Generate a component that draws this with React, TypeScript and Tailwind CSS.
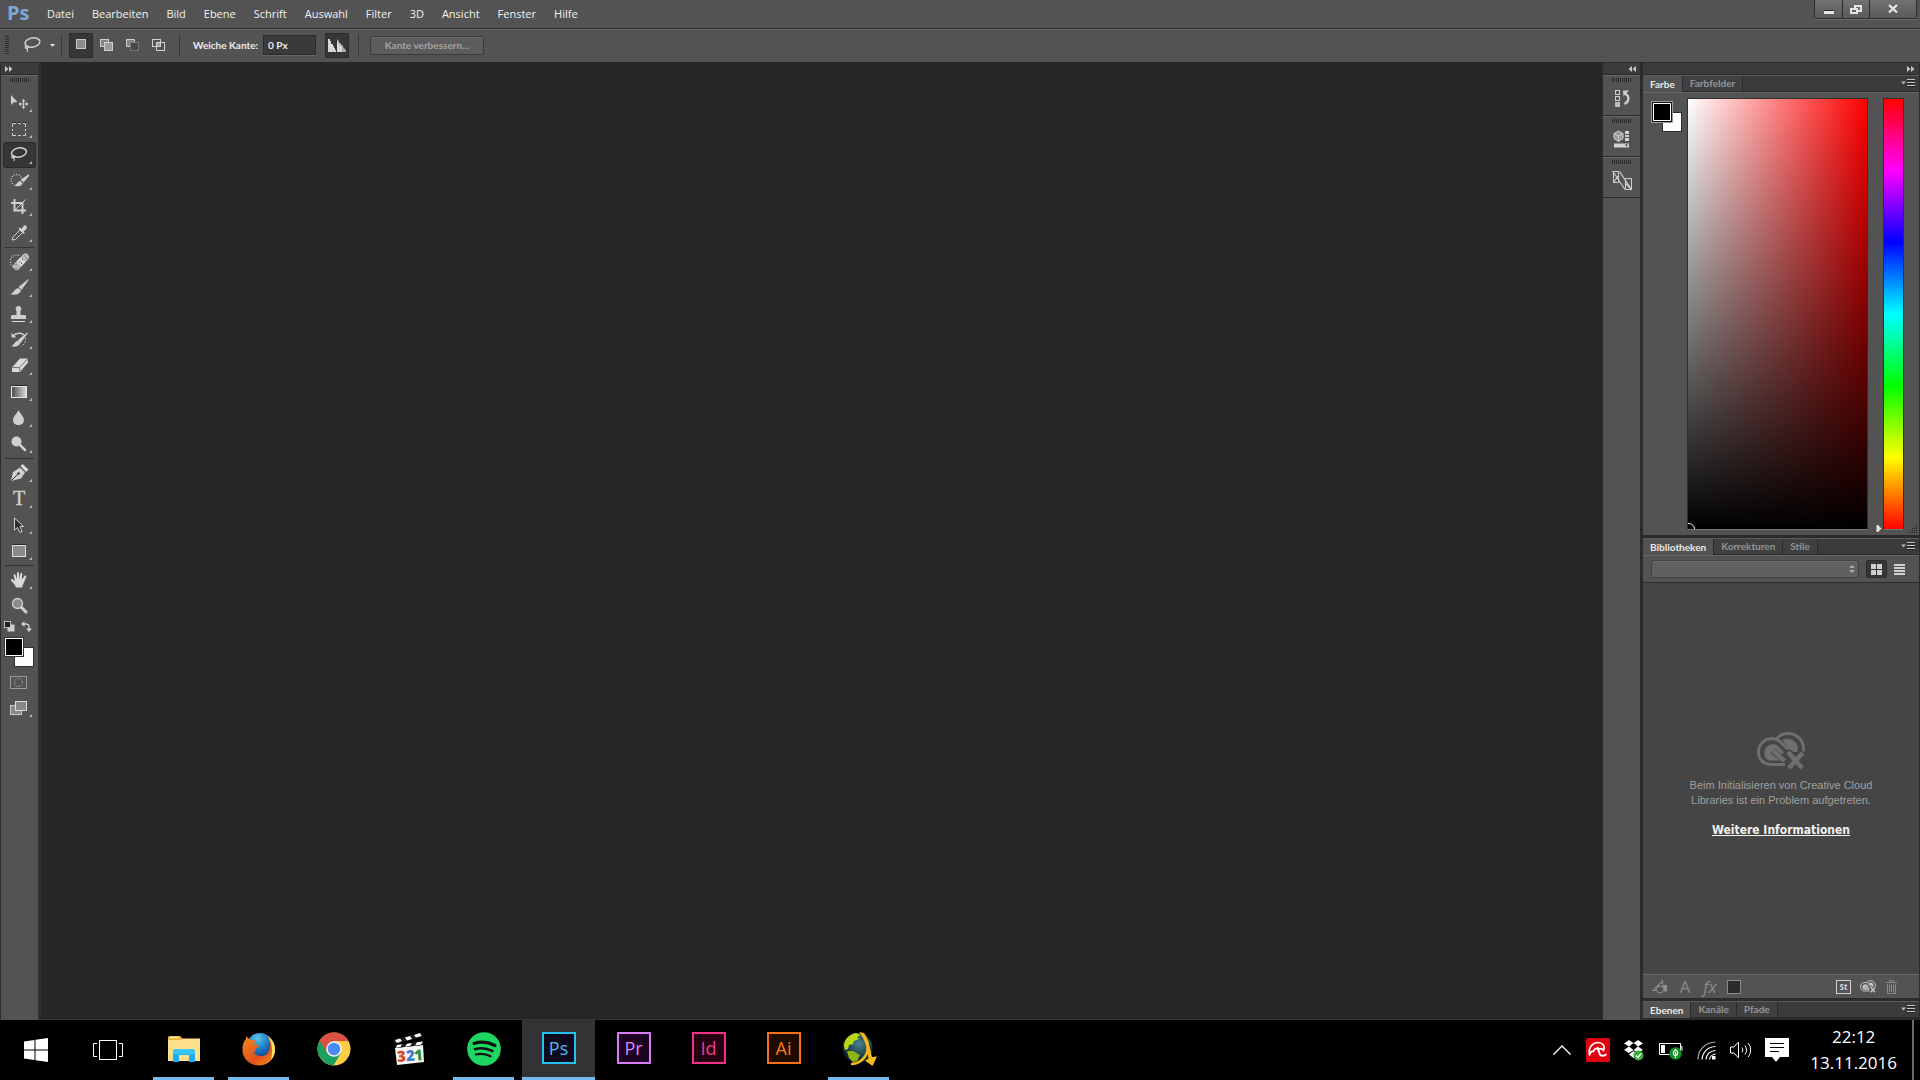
import type { ReactNode } from 'react'

const MENU = ['Datei', 'Bearbeiten', 'Bild', 'Ebene', 'Schrift', 'Auswahl', 'Filter', '3D', 'Ansicht', 'Fenster', 'Hilfe']

/* ---------- small shared pieces ---------- */

function Grip() {
  return (
    <svg width="20" height="4" viewBox="0 0 20 4" className="block" aria-hidden="true">
      {[0, 2, 4, 6, 8, 10, 12, 14, 16, 18].map((x) => (
        <rect key={x} x={x} width="1" height="4" fill="#2a2a2a" />
      ))}
    </svg>
  )
}

function DoubleChevron({ left = false }: { left?: boolean }) {
  return (
    <svg width="8" height="6" viewBox="0 0 8 6" className={left ? 'block rotate-180' : 'block'} aria-hidden="true">
      <path d="M0 0L3.500 3L0 6ZM4 0L7.500 3L4 6Z" fill="#c6c6c6" />
    </svg>
  )
}

function PanelMenuButton() {
  return (
    <button aria-label="Bedienfeldmenü" className="mr-1 ml-auto flex items-center">
      <svg width="14" height="9" viewBox="0 0 14 9" aria-hidden="true">
        <path d="M0 2.500H5L2.500 5.500Z" fill="#b5b5b5" />
        <path d="M6 .5H14M6 3.500H14M6 6.500H14" stroke="#c4c4c4" />
        <path d="M6 1.500H14M6 4.500H14M6 7.500H14" stroke="#222" />
      </svg>
    </button>
  )
}

function Tabs({ items }: { items: string[] }) {
  return (
    <div className="flex h-[17px] shrink-0 border-t border-[#5c5c5c] bg-[#3b3b3b]">
      {items.map((item, i) => (
        <button
          key={item}
          className={`border-r border-[#2b2b2b] px-[7px] font-['Lato',sans-serif] text-[10px] leading-[15px] font-bold ${
            i === 0 ? 'bg-[#535353] text-[#e8e8e8]' : 'border-b bg-[#404040] text-[#959595]'
          }`}
        >
          {item}
        </button>
      ))}
      <div className="flex flex-1 border-b border-[#2b2b2b]">
        <PanelMenuButton />
      </div>
    </div>
  )
}

/* ---------- tool box ---------- */

function Tool({ label, active, flyout = true, children }: { label: string; active?: boolean; flyout?: boolean; children: ReactNode }) {
  return (
    <button
      aria-label={label}
      className={`my-px flex h-6 w-[31px] items-center justify-center rounded-[2px] ${
        active ? 'bg-[#363636] shadow-[0_0_0_1px_#2a2a2a]' : ''
      }`}
    >
      <svg width="24" height="24" viewBox="0 0 24 24" fill="none" stroke="#d0d0d0" aria-hidden="true">
        {children}
        {flyout && <path d="M24 18V21H21Z" fill="#b8b8b8" stroke="none" />}
      </svg>
    </button>
  )
}

function ToolRule() {
  return <div className="my-px h-px w-[29px] bg-[#343434]" />
}

function Toolbox() {
  return (
    <aside className="flex w-[40px] shrink-0 flex-col border-r-3 border-[#303030] bg-[#535353]">
      <div className="flex h-[13px] shrink-0 items-center border-y border-[#2b2b2b] bg-[#3b3b3b] pl-1">
        <DoubleChevron />
      </div>
      <div className="flex flex-col items-center border-t border-[#666]">
        <div className="mt-[2px] mb-[8px]">
          <Grip />
        </div>
        <Tool label="Verschieben">
          <path d="M3 4V14L5.500 11.500L9.500 11Z" fill="#d0d0d0" stroke="none" />
          <path d="M15.500 9V17M11.500 13H19.500" strokeWidth="1" />
          <path d="M15.500 8L17.500 10.500H13.500ZM15.500 18L17.500 15.500H13.500ZM10.500 13L13 11V15ZM20.500 13L18 11V15Z" fill="#d0d0d0" stroke="none" />
        </Tool>
        <Tool label="Auswahlrechteck">
          <path d="M4.500 10V6.500H8M10 6.500H13M15 6.500H17.500V10M17.500 12V14M17.500 16V18.500H15M13 18.500H10M8 18.500H4.500V16M4.500 14V12" />
          <path d="M4 5.500H8M10 5.500H13M15 5.500H18" stroke="#2a2a2a" />
        </Tool>
        <Tool label="Lasso" active>
          <ellipse cx="11" cy="9.500" rx="7.500" ry="4.500" strokeWidth="1.500" transform="rotate(-10 11 9.500)" />
          <path d="M5 12C2.500 14 4 15.500 6 14.500C8 13.500 5.500 12 5.500 13.500C5.500 15 7 16 6 18" strokeWidth="1.200" />
        </Tool>
        <Tool label="Schnellauswahl">
          <circle cx="8.500" cy="11" r="5.500" strokeDasharray="1 1.500" strokeWidth="1.300" />
          <path d="M21 5L13 10.500L15.500 13.500L21 7Z" fill="#d0d0d0" stroke="none" />
          <path d="M12.500 11.500L15 14.500C13.500 18 9 18 6 17C8 16.500 8.500 12.500 12.500 11.500Z" fill="#d0d0d0" stroke="#3a3a3a" strokeWidth=".5" />
        </Tool>
        <Tool label="Freistellen">
          <path d="M3 8H14.500V19M6.500 4V15.500H18" strokeWidth="2" />
          <path d="M6.500 15.500L17.500 4.500" />
        </Tool>
        <Tool label="Pipette">
          <path d="M4 19L5 16L12 9L14.500 11.500L7.500 18.500Z" stroke="#d0d0d0" />
          <path d="M10.500 7.500L12 6.500L13.500 8L16 4.500C17.500 3.500 20 6 18.500 8L15.500 10.500L17 12L15.500 13Z" fill="#d0d0d0" stroke="none" />
        </Tool>
        <ToolRule />
        <Tool label="Bereichsreparatur">
          <path d="M11 5.500C6 3.500 2 8 2.500 11C2.500 15 4 17 6 17" strokeDasharray="1 1.500" strokeWidth="1.300" />
          <path d="M8.500 16.500L17.500 7" strokeWidth="7" strokeLinecap="round" stroke="#b9b9b9" />
          <path d="M11 14L15 9.800" strokeWidth="6.500" stroke="#dedede" />
          <path d="M11.500 11.500V12.500M13.500 13V14M14.500 9V10M8 14V15M8 18V19M17 5.500V6.500M18.500 8V9M13 11.500V12.500" stroke="#555" />
        </Tool>
        <Tool label="Pinsel">
          <path d="M20.500 3.500L11 11L13.500 13.500Z" fill="#d0d0d0" stroke="#d0d0d0" strokeWidth=".8" />
          <path d="M10.500 12L13 14.500C12 18.500 6.500 19.500 2 18C5.500 17.500 6 13 10.500 12Z" fill="#d0d0d0" stroke="none" />
        </Tool>
        <Tool label="Kopierstempel">
          <path d="M10.500 4C13.500 4 14 7 12.500 9V13H17L18 14V17H3V14L4 13H8.500V9C7 7 7.500 4 10.500 4Z" fill="#cfcfcf" stroke="none" />
          <path d="M4 19.500H17" stroke="#e0e0e0" />
        </Tool>
        <Tool label="Protokollpinsel">
          <path d="M5 8C8 4.500 14 4.500 16 7" strokeWidth="1.500" />
          <path d="M3.500 5V9.500H8.500Z" fill="#d0d0d0" stroke="none" />
          <path d="M19.500 5L10.500 12L12.500 14.500Z" fill="#d0d0d0" />
          <path d="M10 12.500L12.500 15C11 18.500 6.500 19.500 3 18C6 17.500 6.500 13.500 10 12.500Z" fill="#d0d0d0" stroke="none" />
          <path d="M17.500 10C18 14 16 17 13.500 18" strokeDasharray="1.500 1.500" />
        </Tool>
        <Tool label="Radiergummi">
          <path d="M4 13.500L12 4.500H19.500L20 8.500L12 18H4Z" fill="#d9d9d9" stroke="none" />
          <path d="M4.500 13.500H11.500L19.500 5M11.500 13.500L12 18" stroke="#777" />
        </Tool>
        <Tool label="Verlauf">
          <defs>
            <linearGradient id="toolGradient">
              <stop stopColor="#4b4b4b" />
              <stop offset="1" stopColor="#ddd" />
            </linearGradient>
          </defs>
          <rect x="3.500" y="6.500" width="15" height="11" fill="url(#toolGradient)" stroke="#e6e6e6" />
          <path d="M3 5.500H19" stroke="#2a2a2a" />
        </Tool>
        <Tool label="Weichzeichner">
          <path d="M10.500 4C11.500 7 16 10.500 16 14C16 17 13.500 19 10.500 19C7.500 19 5 17 5 14C5 10.500 9.500 7 10.500 4Z" fill="#cfcfcf" stroke="none" />
        </Tool>
        <Tool label="Abwedler">
          <path d="M12 13L17 18" strokeWidth="2.500" strokeLinecap="round" />
          <circle cx="8.500" cy="9.500" r="5" fill="#d0d0d0" stroke="none" />
        </Tool>
        <ToolRule />
        <Tool label="Zeichenstift">
          <path d="M3 20L5 11L12 6.500L17 11.500L13 17.500Z" fill="#d0d0d0" stroke="none" />
          <path d="M12.500 5L14.500 3L20.500 8.500L18 11Z" fill="#dcdcdc" stroke="none" />
          <path d="M3.500 19.500L10 13" stroke="#3b3b3b" />
          <circle cx="10.500" cy="12.500" r="1.300" fill="#3b3b3b" stroke="none" />
        </Tool>
        <Tool label="Text">
          <text x="11" y="18" textAnchor="middle" fontSize="20" fontFamily="Liberation Serif, serif" fill="#d0d0d0" stroke="#d0d0d0" strokeWidth=".4">T</text>
        </Tool>
        <Tool label="Pfadauswahl">
          <path d="M6.500 5V17L9.500 14.500L11.500 19H14L12 13.500H15.500Z" fill="#2d2d2d" stroke="#d0d0d0" />
        </Tool>
        <Tool label="Rechteck">
          <rect x="4.500" y="6.500" width="13" height="11" fill="#8a8a8a" stroke="#dedede" />
          <path d="M4 5.500H18" stroke="#2a2a2a" />
        </Tool>
        <ToolRule />
        <Tool label="Hand">
          <path d="M8 19.500L6.500 16.500L3 12.500C2.500 11 4 10.500 5 11.500L7 13L5.500 7C5.500 5.500 7 5.500 7.500 7L8.800 11L9 5C9.200 3.500 10.800 3.500 11 5L11.200 11L12.500 5.500C13 4.200 14.500 4.500 14.300 6L13.800 11.500L16.500 8C17.500 7 18.800 7.800 18.200 9L15.500 15.500L14 19.500Z" fill="#d8d8d8" stroke="none" />
        </Tool>
        <Tool label="Zoom" flyout={false}>
          <path d="M13 13L18 18" strokeWidth="3" strokeLinecap="round" />
          <circle cx="9.500" cy="9.500" r="5" fill="#8b8b8b" strokeWidth="1.300" />
        </Tool>
        <div className="mt-[2px] flex h-[16px] w-[31px] items-start justify-between pr-[3px]">
          <button aria-label="Standardfarben">
            <svg width="11" height="11" viewBox="0 0 11 11" className="block" aria-hidden="true">
              <rect x="3.500" y="3.500" width="7" height="7" fill="#d0d0d0" />
              <rect x=".5" y=".5" width="6" height="6" fill="#222" stroke="#bbb" />
            </svg>
          </button>
          <button aria-label="Farben tauschen">
            <svg width="11" height="11" viewBox="0 0 11 11" className="block" aria-hidden="true">
              <path d="M2 3H5Q8 3 8 6V9" fill="none" stroke="#d0d0d0" strokeWidth="1.300" />
              <path d="M0 3L3.500 0V6ZM8 11L5 7.500H11Z" fill="#d0d0d0" />
            </svg>
          </button>
        </div>
        <div className="relative mb-[2px] h-[30px] w-[29px]">
          <button aria-label="Hintergrundfarbe" className="absolute right-0 bottom-0 size-5 border border-[#333] bg-white" />
          <button aria-label="Vordergrundfarbe" className="absolute top-px left-0 size-[18px] border border-white bg-black shadow-[0_0_0_1px_#333]" />
        </div>
        <Tool label="Maskierungsmodus" flyout={false}>
          <rect x="2.500" y="6.500" width="16" height="12" stroke="#9b9b9b" />
          <circle cx="10.500" cy="12.500" r="4" strokeDasharray="1 1.100" stroke="#bbb" />
        </Tool>
        <Tool label="Bildschirmmodus">
          <rect x="2.500" y="9.500" width="11" height="9" fill="#888" stroke="#c8c8c8" />
          <rect x="7.500" y="5.500" width="11" height="9" fill="#888" stroke="#dcdcdc" />
        </Tool>
      </div>
    </aside>
  )
}

/* ---------- menu and options ---------- */

function MenuBar() {
  return (
    <header className="flex h-7 shrink-0 items-start bg-[#535353]">
      <div className="w-[38px] pl-[7px] text-[20px] leading-[26px] font-bold text-[#7ba6d8]">Ps</div>
      <nav className="flex h-7 items-center">
        {MENU.map((item) => (
          <button key={item} className="px-[9px] text-[11px] text-[#f2f2f2]">
            {item}
          </button>
        ))}
      </nav>
      <div className="mr-[3px] ml-auto flex h-[19px] rounded-b-[2px] border-x border-b border-[#2b2b2b] bg-linear-to-b from-[#727272] to-[#5a5a5a] shadow-[0_1px_0_#6d6d6d]">
        <button aria-label="Minimieren" className="flex w-[28px] justify-center border-r border-[#2b2b2b] pt-[11px]">
          <span className="block h-[3px] w-[10px] bg-[#e6e6e6] shadow-[0_-1px_0_#2b2b2b]" />
        </button>
        <button aria-label="Wiederherstellen" className="flex w-[27px] justify-center border-r border-[#2b2b2b] pt-[4px]">
          <svg width="12" height="11" viewBox="0 0 12 11" fill="none" stroke="#e6e6e6" strokeWidth="2" aria-hidden="true">
            <path d="M5 4V2H11V7H8" />
            <rect x="1" y="5" width="6" height="4" />
          </svg>
        </button>
        <button aria-label="Schließen" className="flex w-[46px] justify-center pt-[4px]">
          <svg width="10" height="10" viewBox="0 0 10 10" fill="none" stroke="#e6e6e6" strokeWidth="2.300" aria-hidden="true">
            <path d="M1 1L9 8.500M9 1L1 8.500" />
          </svg>
        </button>
      </div>
    </header>
  )
}

function OptionRule() {
  return <div className="h-[23px] w-px bg-[#383838]" />
}

function OptionsBar() {
  const modeButton = 'flex h-[25px] w-6 items-center justify-center rounded-[2px]'
  return (
    <div className="flex h-[34px] shrink-0 items-center border-t border-[#2b2b2b] bg-[#535353] pb-px pl-[5px] shadow-[inset_0_1px_0_#666]">
      <svg width="4" height="20" viewBox="0 0 4 20" aria-hidden="true">
        {[0, 2, 4, 6, 8, 10, 12, 14, 16, 18].map((y) => (
          <rect key={y} y={y} width="4" height="1" fill="#2f2f2f" />
        ))}
      </svg>
      <button aria-label="Lasso-Werkzeug" className="ml-[13px] flex w-[39px] items-center gap-2">
        <svg width="20" height="18" viewBox="0 0 20 18" fill="none" stroke="#d0d0d0" aria-hidden="true">
          <ellipse cx="10.500" cy="6.500" rx="7.500" ry="4.500" strokeWidth="1.500" transform="rotate(-10 10.500 6.500)" />
          <path d="M4.500 9C2 11 3.500 13 5.500 12C7.500 11 5 9.500 5 11C5 12.500 6.500 13.500 5 16" strokeWidth="1.200" />
        </svg>
        <svg width="5" height="3" viewBox="0 0 5 3" aria-hidden="true">
          <path d="M0 0H5L2.500 3Z" fill="#e0e0e0" />
        </svg>
      </button>
      <OptionRule />
      <div className="ml-[7px] flex items-center gap-[2px]">
        <button aria-label="Neue Auswahl" className={`${modeButton} bg-[#363636] shadow-[inset_0_0_0_1px_#2a2a2a]`}>
          <svg width="14" height="14" viewBox="0 0 14 14" aria-hidden="true">
            <rect x="2.500" y="1.500" width="9" height="9" fill="#8b8b8b" stroke="#c8c8c8" />
          </svg>
        </button>
        <button aria-label="Der Auswahl hinzufügen" className={modeButton}>
          <svg width="14" height="14" viewBox="0 0 14 14" stroke="#cfcfcf" aria-hidden="true">
            <rect x=".5" y="1.500" width="8" height="7" fill="#858585" />
            <rect x="4.500" y="4.500" width="8" height="8" fill="#9b9b9b" />
          </svg>
        </button>
        <button aria-label="Von Auswahl subtrahieren" className={modeButton}>
          <svg width="14" height="14" viewBox="0 0 14 14" fill="none" aria-hidden="true">
            <path d="M.5 8.500V1.500H8.500V4.500H4.500V8.500Z" fill="#858585" stroke="#cfcfcf" />
            <rect x="4.500" y="4.500" width="8" height="8" fill="#484848" stroke="#7a7a7a" />
          </svg>
        </button>
        <button aria-label="Schnittmenge bilden" className={modeButton}>
          <svg width="14" height="14" viewBox="0 0 14 14" fill="none" stroke="#cfcfcf" aria-hidden="true">
            <rect x="4.500" y="4.500" width="4" height="4" fill="#a0a0a0" />
            <rect x=".5" y="1.500" width="8" height="7" />
            <rect x="4.500" y="4.500" width="8" height="8" />
          </svg>
        </button>
      </div>
      <div className="ml-[8px]">
        <OptionRule />
      </div>
      <label htmlFor="feather" className="ml-[13px] w-[70px] font-['Lato',sans-serif] text-[10px] font-bold whitespace-nowrap text-[#ececec]">
        Weiche Kante:
      </label>
      <input
        id="feather"
        defaultValue="0 Px"
        className="h-[20px] w-[53px] border border-[#2b2b2b] bg-[#3a3a3a] px-1 font-['Lato',sans-serif] text-[10px] font-bold text-[#ececec] shadow-[0_1px_0_#666]"
      />
      <button aria-label="Glätten" className={`${modeButton} ml-[9px] bg-[#363636] shadow-[inset_0_0_0_1px_#2a2a2a]`}>
        <svg width="18" height="13" viewBox="0 0 18 13" aria-hidden="true">
          <path d="M0 0H2V2H3V5H5V7H6V9H7V11H8V13H0Z" fill="#d6d6d6" />
          <path d="M9 0L11 2V4H13V6H15V8L18 11V13H9Z" fill="#a5a5a5" />
          <path d="M9 2L14 8V13H9Z" fill="#d6d6d6" />
        </svg>
      </button>
      <div className="ml-[9px]">
        <OptionRule />
      </div>
      <button className="ml-[11px] h-[19px] w-[114px] rounded-[2px] border border-[#3a3a3a] bg-[#5c5c5c] font-['Lato',sans-serif] text-[10px] leading-[17px] font-bold text-[#a2a2a2] shadow-[inset_0_1px_0_#6b6b6b]">
        Kante verbessern...
      </button>
    </div>
  )
}

/* ---------- right hand docks ---------- */

function DockButton({ label, children }: { label: string; children: ReactNode }) {
  return (
    <button
      aria-label={label}
      className="flex h-[41px] w-full flex-col items-center border-t border-b border-t-[#666] border-b-[#2b2b2b] pt-[2px]"
    >
      <Grip />
      <svg width="24" height="24" viewBox="0 0 24 24" fill="none" stroke="#cfcfcf" className="mt-[5px]" aria-hidden="true">
        {children}
      </svg>
    </button>
  )
}

function IconDock() {
  return (
    <aside className="flex w-[41px] shrink-0 flex-col border-x-2 border-[#2b2b2b] bg-[#535353]">
      <div className="flex h-[13px] shrink-0 items-center justify-end border-y border-[#2b2b2b] bg-[#3b3b3b] pr-1">
        <DoubleChevron left />
      </div>
      <DockButton label="Protokoll">
        <rect x="5.500" y="3.500" width="4" height="4" />
        <rect x="5.500" y="9.500" width="4" height="4" />
        <rect x="5" y="15" width="5" height="5" fill="#bdbdbd" stroke="none" />
        <path d="M15.500 7C20 9 19 15 14.500 17" strokeWidth="2.200" />
        <path d="M13 3.500H19L13.500 9.500Z" fill="#cfcfcf" stroke="none" />
      </DockButton>
      <DockButton label="Eigenschaften">
        <path d="M8.500 3L13 5.500V10.500L8.500 13.500L4 10.500V5.500Z" fill="#999" stroke="#d2d2d2" />
        <path d="M4 5.500L8.500 8L13 5.500M8.500 8V13" />
        <path d="M15 3H19V6H15ZM15 7H19V9H15ZM15 10H19V13H15ZM4 15.500H19V19.500H4Z" fill="#d2d2d2" stroke="none" />
        <path d="M15 16.500H18L16.500 18.500Z" fill="#333" stroke="none" />
      </DockButton>
      <DockButton label="Ebenenkomp.">
        <path d="M3.500 2.500L8.500 2.500L8.500 13.500H3.500Z" />
        <path d="M15.500 9.500H21.500V20.500H15.500Z" />
        <path d="M2.500 2L15 20.500M9.500 2.500L21.500 20.500M4 13L8 7M15 14L21 20" strokeWidth="1.200" />
      </DockButton>
    </aside>
  )
}

function CloudIcon({ className, color }: { className: string; color: string }) {
  return (
    <svg viewBox="0 0 48 38" fill="none" stroke={color} className={className} aria-hidden="true">
      <path d="M28 32.500H14C6.500 32.500 1.500 27 1.500 20C1.500 12 8 6.500 15 6.500C18 6.500 20.500 7.500 23 9.500L31 17.500" strokeWidth="3" />
      <path d="M19 7.500C22 3.500 26 1.500 31 1.500C40 1.500 46.500 8.500 46.500 16.500V19.500" strokeWidth="3" />
      <path d="M25 8C29 5.500 36 6.500 39 11C41 14 41 17 40.500 20H37L32 17Z" fill={color} stroke="none" />
      <path d="M27.500 29L16 18.500" strokeWidth="4.500" />
      <path d="M23 28.500H14C9 28.500 6.500 24 7.500 19C9 12 17 10.500 21 14L27 20L24.500 22.500L18.500 16.500L13.500 21Z" fill={color} stroke="none" />
      <path d="M31 20L45 36M45.500 21L32 36" strokeWidth="4.500" />
    </svg>
  )
}

function ColorPanel() {
  return (
    <section className="flex shrink-0 flex-col">
      <Tabs items={['Farbe', 'Farbfelder']} />
      <div className="relative flex h-[443px] border-t border-[#666] pt-[5px]">
        <div className="relative mt-[4px] ml-[9px] h-[30px] w-[30px]">
          <button aria-label="Hintergrundfarbe" className="absolute right-0 bottom-0 size-5 border border-[#2b2b2b] bg-white" />
          <button
            aria-label="Vordergrundfarbe"
            className="absolute top-px left-px size-[18px] border border-white bg-black shadow-[0_0_0_1px_#111,0_0_0_2px_#999]"
          />
        </div>
        <div className="ml-[5px] flex h-[432px] flex-1 items-end border border-[#2f2f2f] border-b-[#777] bg-[linear-gradient(to_top,rgb(0,0,0),rgba(0,0,0,0)),linear-gradient(to_right,rgb(255,255,255),rgb(255,0,0))]">
          <svg width="7" height="6" viewBox="0 0 7 6" fill="none" stroke="#fff" aria-hidden="true">
            <path d="M0 .5C4 .5 6.500 3 6.500 6" />
          </svg>
        </div>
        <div className="flex w-[15px] items-end justify-end pb-[2px]">
          <svg width="8" height="9" viewBox="0 0 8 9" aria-hidden="true">
            <path d="M1 .5H3L7 4.500L3 8.500H1Z" fill="#e2e2e2" stroke="#333" strokeWidth=".7" />
          </svg>
        </div>
        <div className="mr-[15px] h-[432px] w-[21px] border border-[#2f2f2f] border-b-[#777] bg-[linear-gradient(to_bottom,#f00,#f0f,#00f,#0ff,#0f0,#ff0,#f00)]" />
        <svg width="9" height="9" viewBox="0 0 9 9" fill="#222" className="absolute right-[2px] bottom-[2px]" aria-hidden="true">
          <path d="M8 0h1v1h-1zM6 2h1v1h-1zM8 2h1v1h-1zM4 4h1v1h-1zM6 4h1v1h-1zM8 4h1v1h-1zM2 6h1v1h-1zM4 6h1v1h-1zM6 6h1v1h-1zM8 6h1v1h-1zM0 8h1v1h-1zM2 8h1v1h-1zM4 8h1v1h-1zM6 8h1v1h-1zM8 8h1v1h-1z" />
        </svg>
      </div>
    </section>
  )
}

function LibrariesPanel() {
  return (
    <section className="flex min-h-0 flex-1 flex-col border-t-[3px] border-[#2b2b2b]">
      <Tabs items={['Bibliotheken', 'Korrekturen', 'Stile']} />
      <div className="flex h-[28px] shrink-0 items-center border-t border-b border-t-[#666] border-b-[#2b2b2b] pr-[14px] pl-[8px]">
        <div className="relative flex-1">
          <select
            aria-label="Bibliothek"
            className="block h-[18px] w-full appearance-none rounded-[3px] border border-[#414141] bg-[#606060] shadow-[inset_0_1px_0_#6d6d6d]"
          />
          <svg width="6" height="8" viewBox="0 0 6 8" fill="#aaa" className="pointer-events-none absolute top-[5px] right-[4px]" aria-hidden="true">
            <path d="M0 3L3 0L6 3ZM0 5H6L3 8Z" />
          </svg>
        </div>
        <button aria-label="Rasteransicht" className="ml-[7px] flex h-[18px] w-[21px] items-center justify-center rounded-[3px] bg-[#363636] shadow-[inset_0_0_0_1px_#2b2b2b]">
          <svg width="11" height="11" viewBox="0 0 11 11" fill="#d0d0d0" aria-hidden="true">
            <path d="M0 0H5V5H0ZM6 0H11V5H6ZM0 6H5V11H0ZM6 6H11V11H6Z" />
          </svg>
        </button>
        <button aria-label="Listenansicht" className="ml-[7px]">
          <svg width="11" height="11" viewBox="0 0 11 11" fill="#d0d0d0" className="block" aria-hidden="true">
            <path d="M0 0H11V2H0ZM0 3H11V5H0ZM0 6H11V8H0ZM0 9H11V11H0Z" />
          </svg>
        </button>
      </div>
      <div className="flex min-h-0 flex-1 flex-col items-center justify-center bg-[#454545] pt-[12px] text-center">
        <CloudIcon className="mb-2 h-[38px] w-[48px]" color="#6f6f6f" />
        <p className="font-['Liberation_Sans',sans-serif] text-[11px] leading-[15px] text-[#a0a0a0]">
          Beim Initialisieren von Creative Cloud
          <br />
          Libraries ist ein Problem aufgetreten.
        </p>
        <a href="#info" className="mt-[14px] font-['DejaVu_Sans_Condensed','DejaVu_Sans',sans-serif] text-[12px] leading-4 font-bold text-[#f2f2f2] underline">
          Weitere Informationen
        </a>
      </div>
      <div className="flex h-[24px] shrink-0 items-center border-t border-[#666] pr-[22px] pl-[9px] text-[#8a8a8a]">
        <button aria-label="Grafik hinzufügen">
          <svg width="16" height="14" viewBox="0 0 16 14" fill="none" stroke="#8f8f8f" aria-hidden="true">
            <path d="M10.500 4.500V1L1 10.500H4" strokeWidth="1.200" />
            <circle cx="8" cy="9.500" r="3.500" />
            <path d="M10 5H15V11.500H12C12.300 8.500 11.500 7 10 6Z" fill="#8f8f8f" stroke="none" />
          </svg>
        </button>
        <button aria-label="Zeichenformat hinzufügen" className="ml-[10px] w-[14px] text-[17px] leading-[22px]">
          A
        </button>
        <button aria-label="Ebenenstil hinzufügen" className="ml-[10px] w-[16px] text-[17px] leading-[20px] italic">
          fx
        </button>
        <button aria-label="Farbe hinzufügen" className="ml-[9px] size-[14px] border border-[#8a8a8a] bg-[#2b2b2b]" />
        <button
          aria-label="Adobe Stock"
          className="ml-auto flex h-[14px] w-[15px] items-center justify-center border border-[#d0d0d0] text-[8px] font-bold text-[#d8d8d8]"
        >
          St
        </button>
        <button aria-label="Creative Cloud" className="ml-[9px]">
          <CloudIcon className="block h-[13px] w-[16px]" color="#c4c4c4" />
        </button>
        <button aria-label="Löschen" className="ml-[10px]">
          <svg width="11" height="14" viewBox="0 0 11 14" fill="none" stroke="#8a8a8a" className="block" aria-hidden="true">
            <path d="M0 2.500H11M3.500 2V.5H7.500V2M1.500 4V13.500H9.500V4M3.500 4.500V12M5.500 4.500V12M7.500 4.500V12" />
          </svg>
        </button>
      </div>
    </section>
  )
}

function PanelDock() {
  return (
    <aside className="flex w-[278px] shrink-0 flex-col border-x border-[#2b2b2b] bg-[#535353]">
      <div className="flex h-[13px] shrink-0 items-center justify-end border-y border-[#2b2b2b] bg-[#3b3b3b] pr-1">
        <DoubleChevron />
      </div>
      <ColorPanel />
      <LibrariesPanel />
      <section className="shrink-0 border-t-[3px] border-b-2 border-[#2b2b2b]">
        <Tabs items={['Ebenen', 'Kanäle', 'Pfade']} />
      </section>
    </aside>
  )
}

/* ---------- task bar ---------- */

function Task({ label, running, active, children }: { label: string; running?: boolean; active?: boolean; children: ReactNode }) {
  return (
    <button aria-label={label} className={`mx-px flex w-[73px] flex-col items-center ${active ? 'bg-[#333]' : ''}`}>
      <span className="flex flex-1 items-center justify-center">{children}</span>
      <span className={`h-[3px] ${running || active ? 'bg-[#76b9ed]' : ''} ${active ? 'w-full' : 'w-[61px]'}`} />
    </button>
  )
}

function AdobeTile({ text, className }: { text: string; className: string }) {
  return (
    <span className={`mb-px flex h-[32px] w-[34px] items-center justify-center border-2 font-['Open_Sans',sans-serif] text-[18px] leading-[28px] font-medium ${className}`}>
      {text}
    </span>
  )
}

function ExplorerIcon() {
  return (
    <svg width="34" height="34" viewBox="0 0 34 34" aria-hidden="true">
      <path d="M1 5.500Q1 4 2.500 4H13L16 7H31Q33 7 33 9V29H1Z" fill="#f0b93a" />
      <path d="M1 8H14L16 6.500H33V29H1Z" fill="#ffe08a" />
      <path d="M3 5.500H11" stroke="#fff" />
      <path d="M6 30V20Q6 17 9 17H25Q28 17 28 20V30H22V23H12V30Z" fill="#1fb1f0" />
      <path d="M6 20Q6 17 9 17H25Q28 17 28 20V22H6Z" fill="#36c5f5" />
    </svg>
  )
}

function FirefoxIcon() {
  return (
    <svg width="34" height="34" viewBox="0 0 34 34" aria-hidden="true">
      <defs>
        <linearGradient id="foxBody" x1="0" y1="0" x2="1" y2="1">
          <stop stopColor="#f58a1f" />
          <stop offset=".6" stopColor="#e1501c" />
          <stop offset="1" stopColor="#f79a1e" />
        </linearGradient>
        <radialGradient id="foxGlobe" cx=".4" cy=".2" r=".9">
          <stop stopColor="#5cc5ee" />
          <stop offset=".5" stopColor="#1b74bd" />
          <stop offset="1" stopColor="#0b2c63" />
        </radialGradient>
      </defs>
      <circle cx="18" cy="14.500" r="13.500" fill="url(#foxGlobe)" />
      <path d="M26 4C31 8 33.500 13 33 19C32 28 25 33.500 17 33.500C7 33.500 .5 26 .5 18C.5 12 2 9 4 7L4 4L8 8C10 7.500 12 7.500 14 8.500C12.500 9.500 12 11 12.500 12.500L17 13.500C17 15.500 14 16 13.500 17.500C14 19 13 20 11.500 20C13 24 20 25 24 23C28 20 29 13 27.500 10Z" fill="url(#foxBody)" />
      <path d="M26 4C31 8 33.500 13 33 19C32.500 23 31 26 29 28C31 20 30.500 12 26 4Z" fill="#fde05a" />
    </svg>
  )
}

function ChromeIcon() {
  return (
    <svg width="34" height="34" viewBox="0 0 34 34" aria-hidden="true">
      <circle cx="17" cy="17" r="16.500" fill="#ffcd46" />
      <path d="M17 17L2.700 8.800A16.500 16.500 0 0 0 16.500 33.500L24 21Z" fill="#1aa15f" />
      <path d="M17 9H31.400A16.500 16.500 0 0 0 2.700 8.800L10 21Z" fill="#dc4f43" />
      <circle cx="17" cy="17" r="7.800" fill="#f3f3f3" />
      <circle cx="17" cy="17" r="6.200" fill="#4a8af4" />
    </svg>
  )
}

function ClapperIcon() {
  return (
    <svg width="34" height="34" viewBox="0 0 34 34" className="overflow-visible" aria-hidden="true">
      <path d="M3 16L31 13L32 30L5 33Z" fill="#f6f6f6" />
      <path d="M1 8L29 1L30 5L2 12Z" fill="#1c1c1c" />
      <path d="M3 8L8 6.500L10 9L5 11ZM13 5.500L18 4L20 7L15 8.500ZM22 3L28 1L29.500 4L24 5.500Z" fill="#fff" />
      <path d="M3 13L31 9.500V13L3 16Z" fill="#1c1c1c" />
      <path d="M5 13L10 12.300L8.500 15L4 15.700ZM15 11.800L20 11L18 14L13 14.700ZM25 10.300L31 9.500L29 12.700L23 13.500Z" fill="#fff" />
      <g transform="rotate(-5 18 24)" fontFamily="Open Sans, sans-serif" fontSize="15" fontWeight="800">
        <text x="5" y="29" fill="#d7491c">3</text>
        <text x="14" y="29" fill="#3c7bcb">2</text>
        <text x="22" y="29" fill="#2c9130">1</text>
      </g>
    </svg>
  )
}

function SpotifyIcon() {
  return (
    <svg width="34" height="34" viewBox="0 0 34 34" fill="none" stroke="#111" strokeLinecap="round" aria-hidden="true">
      <circle cx="17" cy="17" r="16.800" fill="#1ed760" stroke="none" />
      <path d="M7 11.500C14 9.300 21.500 10.200 28 13.500" strokeWidth="3.200" />
      <path d="M8 17.200C14 15.500 20 16.200 25.500 19" strokeWidth="2.700" />
      <path d="M8.800 22.500C14 21.200 19 21.800 23.500 24.300" strokeWidth="2.200" />
    </svg>
  )
}

function DownloaderIcon() {
  return (
    <svg width="36" height="36" viewBox="0 0 36 36" aria-hidden="true">
      <defs>
        <radialGradient id="earth" cx=".55" cy=".35" r=".65">
          <stop stopColor="#4b8290" />
          <stop offset=".6" stopColor="#1c424d" />
          <stop offset="1" stopColor="#0b1d22" />
        </radialGradient>
      </defs>
      <circle cx="16.500" cy="17" r="15" fill="url(#earth)" />
      <path d="M3 15C3 8 9 3 15 2L20 4L16 6L18 8L13 10L12 13L8 14L7 18L4 19Z" fill="#b9d912" />
      <path d="M6 20L12 20L19 24L16 30L12 31L8 27Z" fill="#8fb214" />
      <path d="M26 10C28 18 26 24 22 28C19 31 15 33 10 33" fill="none" stroke="#f1b61a" strokeWidth="2.600" />
      <path d="M18 1L23 2C28 9 29 18 31 26L36 25.500L31.500 35L24 29.500L27.500 27.500C26.500 18 24 8 18 1Z" fill="#f5b91b" />
    </svg>
  )
}

function Taskbar() {
  return (
    <footer className="flex h-[60px] shrink-0 bg-black">
      <button aria-label="Start" className="flex w-[72px] items-center justify-center">
        <svg width="24" height="24" viewBox="0 0 24 24" fill="#fff" aria-hidden="true">
          <path d="M0 3.500L10.500 2V11.500H0ZM11.500 1.800L24 0V11.500H11.500ZM0 12.500H10.500V22L0 20.500ZM11.500 12.500H24V24L11.500 22.200Z" />
        </svg>
      </button>
      <button aria-label="Taskansicht" className="mr-[2px] flex w-[72px] items-center justify-center">
        <svg width="30" height="20" viewBox="0 0 30 20" fill="none" stroke="#fff" aria-hidden="true">
          <rect x="6.500" y=".5" width="17" height="19" />
          <path d="M4 3.500H.5V16.500H4M26 3.500H29.500V16.500H26" />
        </svg>
      </button>
      <Task label="Explorer" running>
        <ExplorerIcon />
      </Task>
      <Task label="Firefox" running>
        <FirefoxIcon />
      </Task>
      <Task label="Chrome">
        <ChromeIcon />
      </Task>
      <Task label="Media Player Classic">
        <ClapperIcon />
      </Task>
      <Task label="Spotify" running>
        <SpotifyIcon />
      </Task>
      <Task label="Photoshop" active>
        <AdobeTile text="Ps" className="border-[#26c0f2] bg-[#0c0a1c] text-[#4fb8f5]" />
      </Task>
      <Task label="Premiere Pro">
        <AdobeTile text="Pr" className="border-[#d67bf5] bg-[#1c0324] text-[#df85ff]" />
      </Task>
      <Task label="InDesign">
        <AdobeTile text="Id" className="border-[#f2328a] bg-[#23000f] text-[#f53a8e]" />
      </Task>
      <Task label="Illustrator">
        <AdobeTile text="Ai" className="border-[#f97316] bg-[#1f0b00] text-[#fb7a1e]" />
      </Task>
      <Task label="JDownloader" running>
        <DownloaderIcon />
      </Task>

      <div className="ml-auto flex items-center">
        <button aria-label="Ausgeblendete Symbole">
          <svg width="18" height="10" viewBox="0 0 18 10" fill="none" stroke="#fff" strokeWidth="1.300" aria-hidden="true">
            <path d="M.5 9.500L9 1L17.500 9.500" />
          </svg>
        </button>
        <button aria-label="Avira" className="ml-[15px]">
          <svg width="24" height="24" viewBox="0 0 24 24" fill="none" aria-hidden="true">
            <rect width="24" height="24" rx="1.500" fill="#e3000f" />
            <path d="M3.500 17C2 9 7 4.500 12 4.500C16.500 4.500 19.500 8 17.500 12.500C16 10.500 14 10 12 11.500C10 9.500 8 11 7.500 13.500C5.500 13 4 15 3.500 17Z" stroke="#fff" strokeWidth="1.700" strokeLinejoin="round" />
            <path d="M11.500 9L13.500 15.500C14.500 18.500 18.500 18.500 20.500 16" stroke="#fff" strokeWidth="2" />
          </svg>
        </button>
        <button aria-label="Dropbox" className="ml-[14px]">
          <svg width="20" height="21" viewBox="0 0 20 21" aria-hidden="true">
            <path d="M5 0L9.500 3L5 6.500L0 3.500ZM14 0L19 3.500L14 6.500L9.500 3ZM5 6.500L9.500 10L5 13L0 10ZM14 6.500L19 10L14 13L9.500 10ZM5 14.500L9.500 11L14 14.500L9.500 18Z" fill="#fff" />
            <circle cx="14.500" cy="15.500" r="5" fill="#35ad36" />
            <path d="M12 15.500L14 17.500L17 13.500" fill="none" stroke="#fff" strokeWidth="1.500" />
          </svg>
        </button>
        <button aria-label="Akku" className="ml-[15px]">
          <svg width="24" height="20" viewBox="0 0 24 20" aria-hidden="true">
            <path d="M.5 3.500H21.500V14.500H.5ZM22 6.500H23V11" fill="none" stroke="#fff" />
            <rect x="2" y="5" width="4" height="8" fill="#fff" />
            <circle cx="16.500" cy="13.500" r="6.200" fill="#128f23" />
            <path d="M16.500 9.500C13.500 12 13.500 15 16.500 16C19.500 15 19.500 12 16.500 9.500ZM16.500 12V18" fill="none" stroke="#fff" strokeWidth="1.200" />
          </svg>
        </button>
        <button aria-label="WLAN" className="ml-[14px]">
          <svg width="19" height="19" viewBox="0 0 19 19" fill="none" stroke="#fff" strokeWidth="1.200" aria-hidden="true">
            <path d="M1 18.500C1 9 8 1.500 18.500 1" stroke="#aaa" />
            <path d="M5 18.500C5.500 11.500 10 6 18.500 5.500M9 18.500C9.500 13.500 13 10 18.500 9.500M12.500 18.500C13 15.500 15 13.500 18.500 13" />
            <rect x="15" y="15" width="3.500" height="3.500" fill="#fff" stroke="none" />
          </svg>
        </button>
        <button aria-label="Lautstärke" className="ml-[14px]">
          <svg width="22" height="18" viewBox="0 0 22 18" fill="none" stroke="#fff" aria-hidden="true">
            <path d="M.5 6V12H4L8.500 17V1L4 6Z" />
            <path d="M12 6.500C13 8 13 10 12 11.500M15 4.500C17 7 17 11 15 13.500M18 2C21.500 6 21.500 12 18 16" />
          </svg>
        </button>
        <button aria-label="Info-Center" className="ml-[13px]">
          <svg width="24" height="24" viewBox="0 0 24 24" aria-hidden="true">
            <path d="M0 0H24V19H15L11 24L7 19H0Z" fill="#fff" />
            <path d="M5 5.500H19M5 9.500H19M5 13.500H14" stroke="#000" />
          </svg>
        </button>
        <div className="ml-[21px] text-center text-[17px] leading-[26px] text-white">
          <div>22:12</div>
          <div>13.11.2016</div>
        </div>
        <button aria-label="Desktop anzeigen" className="ml-[15px] h-full w-[8px] border-l-2 border-[#6a6a6a]" />
      </div>
    </footer>
  )
}

export default function App() {
  return (
    <div className="flex h-screen flex-col overflow-hidden bg-[#2b2b2b] font-['Open_Sans',sans-serif]">
      <MenuBar />
      <OptionsBar />
      <div className="flex min-h-0 flex-1 pl-px">
        <Toolbox />
        <main className="flex-1 border-b border-[#333] bg-[#262626]" />
        <IconDock />
        <PanelDock />
      </div>
      <Taskbar />
    </div>
  )
}
